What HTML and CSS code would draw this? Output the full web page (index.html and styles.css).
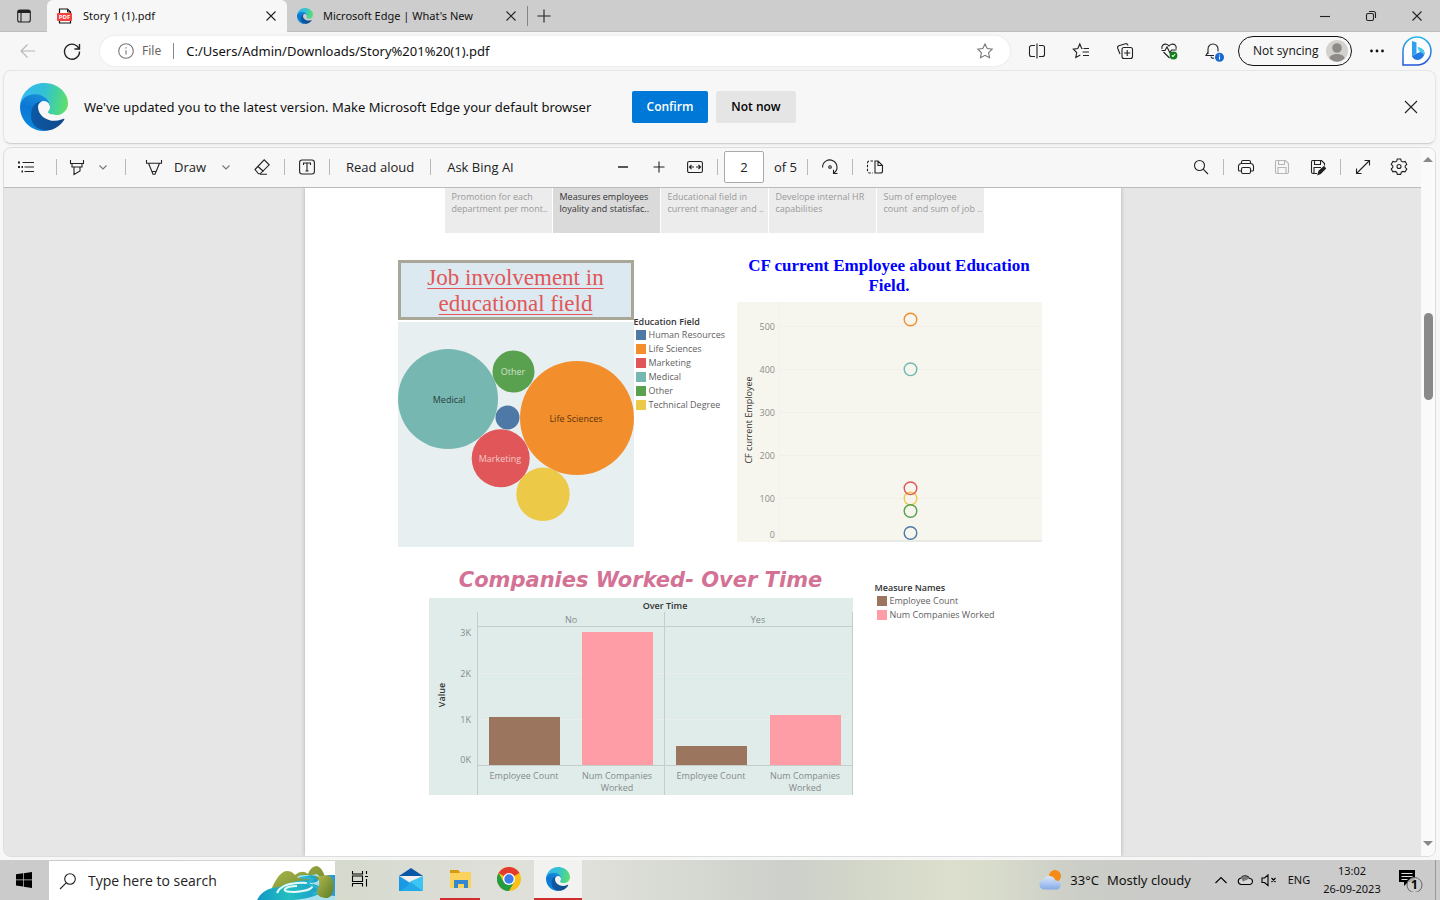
FILE: index.html
```html
<!DOCTYPE html>
<html lang="en">
<head>
<meta charset="utf-8">
<title>Story 1 (1).pdf</title>
<link rel="stylesheet" href="styles.css">
</head>
<body>
<svg class="defs" aria-hidden="true">
  <defs>
    <linearGradient id="edge-a" x1="60" y1="180" x2="230" y2="180" gradientUnits="userSpaceOnUse"><stop offset="0" stop-color="#0c59a4"/><stop offset="1" stop-color="#114a8b"/></linearGradient>
    <linearGradient id="edge-b" x1="120" y1="60" x2="60" y2="230" gradientUnits="userSpaceOnUse"><stop offset="0" stop-color="#1b8fd8"/><stop offset=".5" stop-color="#0b76d4"/><stop offset="1" stop-color="#0a86de"/></linearGradient>
    <linearGradient id="edge-c" x1="20" y1="60" x2="250" y2="110" gradientUnits="userSpaceOnUse"><stop offset="0" stop-color="#35b9f1"/><stop offset=".45" stop-color="#34c1d4"/><stop offset=".75" stop-color="#45d39a"/><stop offset="1" stop-color="#62de6c"/></linearGradient>
    <linearGradient id="bing" x1="0" y1="0" x2="0" y2="1"><stop offset="0" stop-color="#2ab5ee"/><stop offset="1" stop-color="#2456d8"/></linearGradient>
    <linearGradient id="river" x1="0" y1="0" x2="1" y2="0"><stop offset="0" stop-color="#1397c4"/><stop offset=".4" stop-color="#22bfc0"/><stop offset="1" stop-color="#1a8fd0"/></linearGradient>
    <linearGradient id="hill" x1="0" y1="0" x2="1" y2="1"><stop offset="0" stop-color="#b0b94c"/><stop offset="1" stop-color="#5d7c26"/></linearGradient>
    <linearGradient id="cloud" x1="0" y1="0" x2="0" y2="1"><stop offset="0" stop-color="#dbe8fb"/><stop offset="1" stop-color="#86abe8"/></linearGradient>
  </defs>
  <symbol id="edge" viewBox="0 0 256 256">
    <path fill="url(#edge-b)" d="M105.7 241.4c-8.9-5.5-16.6-12.8-22.7-21.3c-26.3-36-18.4-86.5 17.6-112.8c3.8-2.7 7.7-5.2 11.9-7.2c3.1-1.5 8.4-4.1 15.5-4c10.1.1 19.6 4.9 25.7 13c4 5.4 6.3 11.9 6.4 18.7c0-.2 24.5-79.6-80-79.6c-43.9 0-80 41.7-80 78.2c-.2 19.3 4 38.5 12.1 56c27.6 58.8 94.8 87.6 156.4 67.1c-21.1 6.6-44.1 3.7-62.9-8.1z"/>
    <path fill="url(#edge-a)" d="M231 190.5c-3.4 1.8-6.9 3.4-10.5 4.7c-11.5 4.3-23.6 6.5-35.9 6.5c-47.3 0-88.5-32.5-88.5-74.3c.1-11.4 6.4-21.9 16.4-27.3c-42.8 1.8-53.8 46.4-53.8 72.5c0 74 68.1 81.4 82.8 81.4c7.9 0 19.8-2.3 27-4.6l1.3-.4c27.6-9.5 51-28.1 66.6-52.8c1.2-1.9.6-4.3-1.2-5.5c-1.3-.8-2.9-.9-4.2-.2z"/>
    <path fill="url(#edge-c)" d="M152.3 148.9c-.8 1-3.3 2.5-3.3 5.7c0 2.6 1.7 5.1 4.7 7.2c14.4 10 41.5 8.7 41.6 8.7c10.7 0 21.1-2.9 30.3-8.3c18.8-11 30.4-31.1 30.4-52.9c.3-22.4-8-37.3-11.3-43.9C223.5 23.9 177.7 0 128 0C58 0 1 56.2 0 126.2c.5-36.5 36.8-66 80-66c3.5 0 23.5.3 42 10.1c16.3 8.6 24.9 18.9 30.8 29.2c6.2 10.7 7.3 24.1 7.3 29.5c0 5.3-2.7 13.3-7.8 19.9z"/>
  </symbol>
  <symbol id="close" viewBox="0 0 16 16"><path d="M3.5 3.5l9 9M12.5 3.5l-9 9"/></symbol>
  <symbol id="chevron" viewBox="0 0 16 16"><path d="M4.5 6.5L8 10l3.500-3.500"/></symbol>
</svg>

<header class="tabs">
  <button class="tab-menu" aria-label="Tab actions"><svg class="icon" viewBox="0 0 16 16"><rect x="1.700" y="2" width="12.600" height="12" rx="2"/><path d="M1.700 4h12.600M5 5v9" /><path d="M2 3.500h12" stroke-width="3"/></svg></button>
  <div class="tab tab-active">
    <svg class="tab-icon" viewBox="0 0 16 16"><path d="M2.500 1h8l3 3v11h-11z" fill="#fff" stroke="#111" stroke-width="1.200"/><path d="M10.500 1v3h3" fill="none" stroke="#111"/><rect x="0" y="5" width="15" height="8" rx="1" fill="#f5403e"/><text x="7.500" y="11" class="pdf-mark">PDF</text></svg>
    <span>Story 1 (1).pdf</span>
    <button class="tab-close" aria-label="Close tab"><svg class="icon"><use href="#close"/></svg></button>
  </div>
  <div class="tab">
    <svg class="tab-icon"><use href="#edge"/></svg>
    <span>Microsoft Edge | What's New</span>
    <button class="tab-close" aria-label="Close tab"><svg class="icon"><use href="#close"/></svg></button>
  </div>
  <i class="tab-rule"></i>
  <button class="tab-new" aria-label="New tab"><svg class="icon" viewBox="0 0 16 16"><path d="M8 1.500v13M1.500 8h13"/></svg></button>
  <div class="window-buttons">
    <button aria-label="Minimize"><svg class="icon" viewBox="0 0 16 16"><path d="M3 8.500h10"/></svg></button>
    <button aria-label="Restore"><svg class="icon" viewBox="0 0 16 16"><rect x="3.500" y="5.500" width="7" height="7" rx="1.500"/><path d="M6 3.500h4.500a2 2 0 0 1 2 2V10"/></svg></button>
    <button aria-label="Close window"><svg class="icon"><use href="#close"/></svg></button>
  </div>
</header>

<nav class="address-bar">
  <button class="nav-button faint" aria-label="Back"><svg class="icon" viewBox="0 0 16 16"><path d="M15 8H1M7.500 1.500L1 8l6.500 6.500"/></svg></button>
  <button class="nav-button" aria-label="Refresh"><svg class="icon large" viewBox="0 0 18 18"><path stroke-width="1.400" d="M16 7A7.500 7.500 0 1 0 16.500 9.500M16.500 2v5h-5"/></svg></button>
  <div class="url">
    <svg class="icon grey" viewBox="0 0 16 16"><circle cx="8" cy="8" r="7.300"/><path d="M8 7.200v4.300M8 4.300v1.300"/></svg>
    <span class="scheme">File</span><i></i>
    <input type="text" aria-label="Address" value="C:/Users/Admin/Downloads/Story%201%20(1).pdf">
    <button class="star" aria-label="Add to favorites"><svg class="icon grey" viewBox="0 0 16 16"><path d="M8 .9l2.200 4.600 5 .7-3.600 3.500.9 5L8 12.300l-4.500 2.400.9-5L.8 6.200l5-.7z"/></svg></button>
  </div>
  <button class="nav-button" aria-label="Split screen"><svg class="icon" viewBox="0 0 16 16"><path d="M6 2.500H2.500a2 2 0 0 0-2 2v7a2 2 0 0 0 2 2H6M8 .5v15M10 2.500h3.500a2 2 0 0 1 2 2v7a2 2 0 0 1-2 2H10"/></svg></button>
  <button class="nav-button" aria-label="Favorites"><svg class="icon" viewBox="0 0 16 16"><path d="M9.500 5.500H8.700L6.800 1 4.800 5.500l-4.500.7 3.400 3.300-.9 5 4.500-2.400M10.500 5.500H16M9.500 9H16M10 12.500h6"/></svg></button>
  <button class="nav-button" aria-label="Collections"><svg class="icon" viewBox="0 0 16 16"><path d="M3 11L.7 5.200a2 2 0 0 1 1.200-2.500l6.500-2a2 2 0 0 1 2.400 1.200L11 2.500"/><rect x="5" y="4.500" width="10.500" height="11" rx="2"/><path d="M10.200 7v6M7.200 10h6"/></svg></button>
  <button class="nav-button" aria-label="Browser essentials"><svg class="icon" viewBox="0 0 16 16"><path d="M1 6C0 2 3 .8 5.500 1.200 7 1.500 8 3 8 3s1-1.500 2.500-1.800C13.500.8 16 2.500 15 6M2.500 9l6 6M.5 7.500H4l2-3.500 3 6 1.500-3h5"/><circle cx="12.500" cy="12.500" r="3.900" fill="#12801a" stroke="none"/><path class="white" d="M10.800 12.500l1.200 1 2.200-2.500"/></svg></button>
  <button class="nav-button" aria-label="Notifications"><svg class="icon" viewBox="0 0 16 16"><path d="M3 11V6a5 5 0 0 1 10 0V8.500M9 12.500H1L3 9M6 13.500c.3 1.800 2 2 3 1.500"/><circle cx="14.500" cy="14.200" r="4.500" fill="#1769d2" stroke="none"/><path class="white" d="M14.500 13.500v3M14.500 11.500v1"/></svg></button>
  <button class="profile">Not syncing<svg viewBox="0 0 22 22"><circle cx="11" cy="11" r="11" fill="#d3d1ce"/><circle cx="11" cy="8" r="4.800" fill="#8f8b88"/><path d="M3.500 18.500C3.500 12.500 18.500 12.500 18.500 18.500Q11 25 3.500 18.500z" fill="#8f8b88"/></svg></button>
  <button class="nav-button more" aria-label="Settings and more"><svg class="icon" viewBox="0 0 16 16"><g fill="#111" stroke="none"><circle cx="2.500" cy="8" r="1.400"/><circle cx="8" cy="8" r="1.400"/><circle cx="13.500" cy="8" r="1.400"/></g></svg></button>
  <button class="bing" aria-label="Bing"><svg viewBox="0 0 30 30"><path d="M1 29V15A14 14 0 1 1 15 29z" fill="#fdfefe" stroke="url(#bing)" stroke-width="1.500"/><path d="M10 5l4.500 1.500V17l-4.500 4z" fill="#2da1ef"/><path d="M10 20.500l4.500-3 4-1.500-2-4.500c5 1 8 5 4.500 9.500-3 3.500-8 4.500-11-.5z" fill="#2478e2"/><path d="M15.500 11c5 1 8 4 6.500 8-1.500-3-4-2-5.500-5z" fill="#45cdec"/></svg></button>
</nav>

<section class="banner">
  <svg class="banner-logo"><use href="#edge"/></svg>
  <p>We've updated you to the latest version. Make Microsoft Edge your default browser</p>
  <button class="action primary">Confirm</button>
  <button class="action">Not now</button>
  <button class="banner-close" aria-label="Dismiss"><svg class="icon" viewBox="0 0 16 16"><path d="M2 2l12 12M14 2L2 14"/></svg></button>
</section>

<main class="viewer">
  <div class="viewer-body">
    <div class="toolbar">
      <div class="group">
        <button class="tool contents" aria-label="Contents"><svg class="icon" viewBox="0 0 16 16"><path d="M4.500 3.500H16M6.500 8H16M6.500 12.500H16"/><path stroke-width="1.800" d="M0 3.500h2M0 8h2M3.500 8h1.500M3.500 12.500h1.500"/></svg></button>
        <i class="rule"></i>
        <button class="tool tight" aria-label="Highlight"><svg class="icon" viewBox="0 0 16 16"><path d="M1.500 1v3.500h13V1M3 4.500V8h10V4.500M5 8v7.500l6-3.500V8"/></svg></button>
        <button class="drop" aria-label="Highlight options"><svg class="icon"><use href="#chevron"/></svg></button>
        <i class="rule wide"></i>
        <button class="tool text-tool draw"><svg class="icon" viewBox="0 0 16 16"><path d="M.5 1v3.200h15V1M2.500 4.200L7 15.300h2L13.500 4.200M6 12.500h4"/></svg>Draw</button>
        <button class="drop" aria-label="Draw options"><svg class="icon"><use href="#chevron"/></svg></button>
        <button class="tool erase" aria-label="Erase"><svg class="icon" viewBox="0 0 16 16"><path d="M1 10.500L10.200.8l5 5-9 9H4.500zM4 7.500l5.500 5M6 15.300h7"/></svg></button>
        <i class="rule"></i>
        <button class="tool" aria-label="Add text"><svg class="icon" viewBox="0 0 16 16"><rect x=".6" y="1" width="14.800" height="14" rx="2.500"/><path d="M4.500 6V4h7v2M8 4v8M6.500 12h3"/></svg></button>
        <i class="rule"></i>
        <button class="tool text-tool">Read aloud</button>
        <i class="rule"></i>
        <button class="tool text-tool">Ask Bing AI</button>
      </div>
      <div class="group">
        <button class="tool" aria-label="Zoom out"><svg class="icon" viewBox="0 0 16 16"><path d="M3 8h10" stroke-width="1.400"/></svg></button>
        <button class="tool" aria-label="Zoom in"><svg class="icon" viewBox="0 0 16 16"><path d="M8 2.500v11M2.500 8h11"/></svg></button>
        <button class="tool" aria-label="Fit to width"><svg class="icon" viewBox="0 0 16 16"><rect x=".6" y="2.500" width="14.800" height="11" rx="1.500"/><path d="M2.500 8H7M9 8h4.500M4.500 6l-2 2 2 2M11.500 6l2 2-2 2"/></svg></button>
        <i class="rule"></i>
        <input class="page-number" type="text" value="2" aria-label="Page number"><span class="page-count">of 5</span>
        <i class="rule"></i>
        <button class="tool" aria-label="Rotate"><svg class="icon" viewBox="0 0 16 16"><path d="M.6 8.500A7.200 7.200 0 1 1 12 14M11.500 10.800V14.500h4"/><circle cx="8" cy="8" r="1.300"/></svg></button>
        <i class="rule"></i>
        <button class="tool" aria-label="Page view"><svg class="icon" viewBox="0 0 16 16"><path d="M8 2v12h5.500a2 2 0 0 0 2-2V6.500L11 2zM11 2v4.500h4.500"/><path stroke-dasharray="2.500 1.500" d="M6 2H2.500a2 2 0 0 0-2 2v8a2 2 0 0 0 2 2H6"/></svg></button>
      </div>
      <div class="group right">
        <button class="tool" aria-label="Search"><svg class="icon" viewBox="0 0 16 16"><circle cx="6.500" cy="6.500" r="5"/><path d="M10.200 10.200L15 15"/></svg></button>
        <i class="rule"></i>
        <button class="tool" aria-label="Print"><svg class="icon" viewBox="0 0 16 16"><path d="M3.500 12H1.500q-1 0-1-1V7a3 3 0 0 1 3-2.500h9a3 3 0 0 1 3 2.500v4q0 1-1 1h-2M3.500 4.500V3q0-1.500 1.500-1.500h6q1.500 0 1.500 1.500v1.500"/><rect x="3.500" y="8.500" width="9" height="6" rx="1.500"/></svg></button>
        <button class="tool faint" aria-label="Save"><svg class="icon" viewBox="0 0 16 16"><path d="M2.500 1.500h9l3 3v8.500q0 1.500-1.500 1.500H3q-1.500 0-1.500-1.500V3q0-1.500 1-1.500zM4.500 1.500v4h6v-4M4 14.500v-6h8v6"/></svg></button>
        <button class="tool" aria-label="Save as"><svg class="icon" viewBox="0 0 16 16"><path d="M7 14.500H3q-1.500 0-1.500-1.500V3q0-1.500 1-1.500h9l3 3v2M4.500 1.500v4h6v-4M4 14.500v-6h7"/><path d="M8 15.500l1-3.500 5-4.500 1.500 2-5 5z" fill="#222"/></svg></button>
        <i class="rule"></i>
        <button class="tool" aria-label="Full screen"><svg class="icon" viewBox="0 0 16 16"><path d="M1.500 14.500l13-13M9.500 1.500h5v5M6.500 14.500h-5v-5"/></svg></button>
        <button class="tool" aria-label="Settings"><svg class="icon" viewBox="0 0 16 16"><circle cx="8" cy="7.500" r="2"/><path d="M6.300 0h3.400l.6 2.200 1.500.8 2.300-.6 1.700 2.900-1.600 1.600v1.500l1.600 1.700-1.700 2.800-2.300-.5-1.500.8-.6 2.200H6.300l-.6-2.200-1.500-.8-2.300.5L.2 10.100l1.600-1.700V6.900L.2 5.300l1.700-2.900 2.300.6 1.500-.8z"/></svg></button>
      </div>
    </div>

    <div class="desk">
      <article class="sheet">
        <div class="story-points">
          <div>Promotion for each<br>department per mont..</div>
          <div class="current">Measures employees<br>loyality and statisfac..</div>
          <div>Educational field in<br>current manager and ..</div>
          <div>Develope internal HR<br>capabilities</div>
          <div>Sum of employee<br>count&nbsp; and sum of job ..</div>
        </div>

        <div class="row">
          <section class="bubbles">
            <h2>Job involvement in educational field</h2>
            <svg width="236" height="225" viewBox="0 0 236 225" role="img" aria-label="Job involvement in educational field">
              <circle cx="50" cy="77" r="50" fill="#76b7b2"/>
              <circle cx="179" cy="96" r="57" fill="#f28e2b"/>
              <circle cx="115.500" cy="49.500" r="21" fill="#59a14f"/>
              <circle cx="109.500" cy="95.500" r="12" fill="#4e79a7"/>
              <circle cx="102.700" cy="136.300" r="29" fill="#e15759"/>
              <circle cx="145" cy="172.300" r="26.700" fill="#edc948"/>
              <g class="mid">
                <text x="51" y="81" fill="#2b3f3e">Medical</text>
                <text x="178" y="100" fill="#5a3611">Life Sciences</text>
                <text x="115" y="53" fill="#cfe2cc">Other</text>
                <text x="102" y="140" fill="#f4c8c8">Marketing</text>
              </g>
            </svg>
          </section>
          <section class="legend">
            <h3>Education Field</h3>
            <ul>
              <li><i class="blue"></i>Human Resources</li>
              <li><i class="orange"></i>Life Sciences</li>
              <li><i class="red"></i>Marketing</li>
              <li><i class="teal"></i>Medical</li>
              <li><i class="green"></i>Other</li>
              <li><i class="yellow"></i>Technical Degree</li>
            </ul>
          </section>
          <section class="scatter">
            <h2>CF current Employee about Education Field.</h2>
            <svg width="305" height="240" viewBox="0 0 305 240" role="img" aria-label="CF current Employee by education field">
              <path class="grid" d="M42.500 0v240M43 24.500h262M43 67.500h262M43 110.500h262M43 153.500h262M43 196.500h262"/>
              <path d="M43 239h262" stroke="#e9e9e6" stroke-width="2"/>
              <g class="end" fill="#8c8c88">
                <text x="38" y="28">500</text><text x="38" y="71">400</text><text x="38" y="114">300</text><text x="38" y="157">200</text><text x="38" y="200">100</text><text x="38" y="236">0</text>
              </g>
              <text class="mid" transform="translate(15 118) rotate(-90)" fill="#333">CF current Employee</text>
              <g fill="none" stroke-width="1.400">
                <circle cx="173.500" cy="17.500" r="6.300" stroke="#f28e2b"/>
                <circle cx="173.500" cy="67.300" r="6.300" stroke="#76b7b2"/>
                <circle cx="173.500" cy="196.500" r="6.300" stroke="#edc948"/>
                <circle cx="173.500" cy="186.300" r="6.300" stroke="#e15759"/>
                <circle cx="173.500" cy="209" r="6.300" stroke="#59a14f"/>
                <circle cx="173.500" cy="231" r="6.300" stroke="#4e79a7"/>
              </g>
            </svg>
          </section>
        </div>

        <div class="row row-bottom">
          <section class="bars">
            <h2>Companies Worked- Over Time</h2>
            <svg width="424" height="197" viewBox="0 0 424 197" role="img" aria-label="Companies worked over time">
              <path stroke="#e9eeed" d="M46 75.500h378M46 121.500h378M46 28.500h378M142.500 168v3M330.500 168v3"/>
              <path stroke="#c6cccb" fill="none" d="M48.500 14v183M235.500 14v183M423.500 14v183M49 28.500h375M49 167.500h375"/>
              <g fill="#9c755f"><rect x="60" y="119" width="71" height="48"/><rect x="247" y="148" width="71" height="19"/></g>
              <g fill="#ff9da7"><rect x="153" y="34" width="71" height="133"/><rect x="341" y="117" width="71" height="50"/></g>
              <g class="mid" fill="#858b8a">
                <text x="236" y="11" class="bold" fill="#333">Over Time</text>
                <text x="142" y="25">No</text><text x="329" y="25">Yes</text>
                <text x="95" y="181">Employee Count</text><text x="282" y="181">Employee Count</text>
                <text x="188" y="181">Num Companies</text><text x="188" y="193">Worked</text>
                <text x="376" y="181">Num Companies</text><text x="376" y="193">Worked</text>
                <text class="bold" fill="#333" transform="translate(16 97) rotate(-90)">Value</text>
              </g>
              <g class="end" fill="#858b8a"><text x="42" y="38">3K</text><text x="42" y="79">2K</text><text x="42" y="125">1K</text><text x="42" y="165">0K</text></g>
            </svg>
          </section>
          <section class="legend measures">
            <h3>Measure Names</h3>
            <ul>
              <li><i class="brown"></i>Employee Count</li>
              <li><i class="pink"></i>Num Companies Worked</li>
            </ul>
          </section>
        </div>
      </article>
    </div>
  </div>
  <div class="scrollbar"><i class="arrow up"></i><i class="thumb"></i><i class="arrow down"></i></div>
</main>

<footer class="taskbar">
  <button class="start" aria-label="Start"><svg viewBox="0 0 16 16"><path d="M0 2.300l7-1v6.200H0zM7.700 1.200L16 0v7.500H7.700zM0 8.200h7v6.300l-7-1zM7.700 8.200H16V16l-8.300-1.300z"/></svg></button>
  <label class="search">
    <svg class="icon" viewBox="0 0 16 16"><circle cx="10" cy="6" r="5.300"/><path d="M6.200 9.800L0 16"/></svg>
    <input type="text" placeholder="Type here to search" aria-label="Search">
    <svg class="landscape" viewBox="0 0 78 34"><path d="M70 9h8v25h-8z" fill="#2a9bd3"/><path d="M14 24Q22 5 30 5q5 0 8 4 7-6 13-1 3-8 9-8 4 1 7 8l4 14v12H14z" fill="url(#hill)"/><path d="M0 34Q6 22 22 21q16-8 34-7l-15-3 2-2h14l4 5 6 3-2 8L78 30v4z" fill="url(#river)"/><path d="M40 12q0-3 8-3 15 0 14 4-1 4-10 4 16 3 12 9-6 6-28 8h42v-4l-16-2 6-12-8-8z" fill="#a9e2ec"/><path d="M20 27q4-9 20-10 18-1 15 4-2 4-18 5-11 0-9-3 3-3 12-3" fill="none" stroke="#e4f9f8" stroke-width="2"/><path d="M44 12h8q7 1 0 4-4 2 6 4 8 4-2 8" fill="none" stroke="#2bb5cf" stroke-width="2.500"/><path d="M61 11q13-5 15 4 2 14-5 17-12 0-11-8 4-5 1-13z" fill="url(#hill)"/></svg>
  </label>
  <button class="task task-view" aria-label="Task view"><svg class="icon black" viewBox="0 0 16 16"><path d="M.5 0v3h10V0M.5 15.500v-3h10v3M.5 5h10v5.500H.5zM14.500 0v3M14.500 8v7.500M13 5.500h3"/></svg></button>
  <button class="task" aria-label="Mail"><svg class="app" viewBox="0 0 24 24"><path d="M0 9L12 1l12 8z" fill="#0a57a8"/><path d="M2 9h20l-9 8z" fill="#f2f2f2"/><path d="M0 9l24 15H0z" fill="#189be4"/><path d="M24 9v15L10 15z" fill="#3cc4f2"/><path d="M12 15.500L24 24H2z" fill="#23a9e9"/></svg></button>
  <button class="task running partial" aria-label="File Explorer"><svg class="app" viewBox="0 0 24 24"><path d="M2 3h8l2 2v4H2z" fill="#d9990f"/><path d="M2 6h9l2-1h10v16H2z" fill="#fbd25c"/><path d="M6 21v-8h14v8h-4v-4h-6v4z" fill="#3488cf"/></svg></button>
  <button class="task" aria-label="Chrome"><svg class="app" viewBox="0 0 24 24"><circle cx="12" cy="12" r="12" fill="#fbc116"/><path d="M12 12L1.600 6A12 12 0 0 1 22.400 6z" fill="#e33b2e"/><path d="M1.600 6A12 12 0 0 0 12 24l5.200-9H6.800z" fill="#259b43"/><circle cx="12" cy="12" r="6" fill="#fff"/><circle cx="12" cy="12" r="4.700" fill="#3b7ded"/></svg></button>
  <button class="task running active" aria-label="Microsoft Edge"><svg class="app"><use href="#edge"/></svg></button>
  <div class="tray">
    <button class="weather"><svg viewBox="0 0 24 24"><circle cx="17" cy="8" r="6" fill="#f58a16"/><path d="M6 21.500a5 5 0 0 1-.5-9.900 6.500 6.500 0 0 1 12 1A4.500 4.500 0 0 1 19 21.500z" fill="url(#cloud)"/></svg><span>33°C</span><span>Mostly cloudy</span></button>
    <button aria-label="Show hidden icons"><svg class="icon black" viewBox="0 0 16 16"><path d="M2.500 11L8 5.500l5.500 5.500"/></svg></button>
    <button aria-label="OneDrive"><svg class="icon black" viewBox="0 0 16 16"><path d="M4 12.500a3.300 3.300 0 0 1 0-6.500 5 5 0 0 1 8.500.5 3 3 0 0 1 0 6z" fill="#d8d8d8"/><path d="M4 6a5 5 0 0 1 8.500.5L6 9.500z" fill="#777" stroke="none"/></svg></button>
    <button aria-label="Muted"><svg class="icon black" viewBox="0 0 16 16"><path d="M1 6h2.500L7 3v10.500L3.500 10.500H1zM10.500 6l4 4M14.500 6l-4 4"/></svg></button>
    <button class="language">ENG</button>
    <button class="clock"><span>13:02</span><span>26-09-2023</span></button>
    <button class="notices" aria-label="1 notification"><svg viewBox="0 0 24 24"><path d="M0 2h16v12H9l-4 4v-4H0z" fill="#000"/><path d="M2.500 5.500h11M2.500 8.500h11M2.500 11.500h6" stroke="#ddd" stroke-width="1.200"/><circle cx="15.500" cy="17" r="7.500" fill="#cbcbcb" fill-opacity=".85" stroke="#666"/><text x="15.500" y="21">1</text></svg></button>
  </div>
</footer>
</body>
</html>
```

FILE: styles.css
```css
* { box-sizing: border-box; }
html, body { height: 100%; }
body {
  margin: 0;
  display: flex;
  flex-direction: column;
  overflow: hidden;
  background: #f7f7f7;
  color: #111;
  font: 13px/20px "Noto Sans", "Open Sans", sans-serif;
}
button, input { font: inherit; color: inherit; margin: 0; padding: 0; border: 0; background: none; }
button { display: flex; align-items: center; justify-content: center; flex: none; white-space: nowrap; }
input { outline: 0; min-width: 0; }
h2, h3, p, ul { margin: 0; padding: 0; }
ul { list-style: none; }
svg { display: block; flex: none; }
.defs { position: absolute; width: 0; height: 0; }
.icon { width: 16px; height: 16px; fill: none; stroke: #222; stroke-width: 1.1; overflow: visible; }
.large { width: 18px; height: 18px; }
.grey { stroke: #777; }
.black { stroke: #000; }
.white { stroke: #fff; }
.faint { opacity: .3; }

/* Tab strip */
.tabs { flex: none; display: flex; align-items: center; height: 32px; background: #cdcdcd; border-bottom: 1px solid #bdbdbd; font-size: 11px; }
.tab-menu { width: 47px; }
.tab { display: flex; align-items: center; gap: 10px; width: 240px; height: 32px; padding: 0 8px 0 10px; white-space: nowrap; }
.tab-active { background: #f7f7f7; border-radius: 6px 6px 0 0; align-self: flex-start; }
.tab-icon { width: 16px; height: 16px; }
.tab-close { margin-left: auto; }
.pdf-mark { font: bold 6px "Open Sans", sans-serif; fill: #fff; text-anchor: middle; }
.tab-rule { width: 1px; height: 20px; background: #858585; }
.tab-new { width: 32px; }
.window-buttons { display: flex; margin-left: auto; }
.window-buttons button { width: 46px; height: 30px; }

/* Address bar */
.address-bar { flex: none; display: flex; align-items: center; height: 38px; padding: 0 8px 0 6px; }
.nav-button { width: 44px; height: 30px; }
.url { flex: 1; display: flex; align-items: center; height: 30px; margin: 0 5px 0 6px; padding: 0 17px 0 18px; border-radius: 15px; background: #fff; box-shadow: 0 0 3px #e2e2e2; }
.scheme { margin-left: 8px; color: #666; font-size: 12px; }
.url i { width: 1px; height: 16px; margin: 0 12px; background: #888; }
.url input { flex: 1; }
.profile { width: 114px; height: 30px; padding: 0 3px 0 14px; justify-content: space-between; border: 1px solid #111; border-radius: 15px; margin-left: 3px; font: 12px/20px "Open Sans", sans-serif; }
.profile svg { width: 22px; height: 22px; }
.more { width: 50px; }
.bing svg { width: 30px; height: 30px; }

/* Default browser prompt */
.banner { flex: none; display: flex; align-items: center; height: 74px; margin: 0 4px 3px 3px; padding: 0 16px; border: 1px solid #e6e6e6; border-bottom-color: #d2d2d2; border-radius: 8px; box-shadow: 0 1px 2px #e8e8e8; }
.banner-logo { width: 48px; height: 48px; margin-right: 16px; }
.banner p { min-width: 516px; margin-right: 32px; white-space: nowrap; }
.action { width: 80px; height: 32px; border-radius: 2px; background: #e5e5e5; color: #000; font: 600 12px/20px "Open Sans", sans-serif; }
.primary { width: 76px; margin-right: 8px; background: #0078d7; color: #fff; }
.banner-close { margin-left: auto; }

/* PDF viewer */
.viewer { flex: 1; min-height: 0; display: flex; margin: 0 4px 3px 3px; border: 1px solid #ddd; border-radius: 8px; overflow: hidden; }
.viewer-body { flex: 1; min-width: 0; display: flex; flex-direction: column; }
.toolbar { flex: none; display: grid; grid-template-columns: minmax(0, 601px) auto 1fr; align-items: center; height: 40px; padding-bottom: 2px; border-bottom: 1px solid #bbb; font: 13px/20px "Open Sans", sans-serif; color: #222; }
.group { display: flex; align-items: center; }
.right { justify-content: flex-end; padding-right: 4px; }
.tool { width: 36px; height: 32px; }
.contents { margin: 0 8px 0 4px; }
.tight { width: 34px; margin-left: -1px; }
.drop { width: 18px; }
.drop .icon { stroke: #777; }
.rule { width: 1px; height: 16px; margin: 0 4px; background: #b9b9b9; }
.wide { margin-left: 13px; }
.text-tool { width: auto; padding: 0 12px; }
.draw { gap: 12px; padding: 0 11px 0 16px; }
.erase { margin-left: 9px; }
.page-number { width: 40px; height: 32px; margin-left: 2px; border: 1px solid #aaa; border-radius: 2px; background: #fff; text-align: center; }
.page-count { width: 39px; padding-left: 10px; white-space: nowrap; }
.scrollbar { width: 14px; display: flex; flex-direction: column; align-items: center; background: #fafafa; padding: 9px 0 10px; }
.arrow { border: 5px solid transparent; }
.up { border-top: 0; border-bottom-color: #888; }
.down { margin-top: auto; border-bottom: 0; border-top-color: #888; }
.thumb { width: 9px; height: 87px; margin-top: 151px; border-radius: 5px; background: #898989; }

/* Document */
.desk { flex: 1; min-height: 0; overflow: hidden; background: #e6e6e6; }
.sheet { width: 816px; min-height: 100%; margin: 0 auto; padding-left: 93px; background: #fff; box-shadow: 0 0 4px #aaa; font: 9px/12px "Open Sans", sans-serif; }
.story-points { display: flex; gap: 1px; margin-left: 47px; color: #9a9a9a; }
.story-points div { width: 107px; height: 45px; padding: 3px 0 0 7px; background: #ececec; white-space: nowrap; }
.story-points .current { background: #dadada; color: #333; }
.row { display: flex; align-items: flex-start; margin-top: 23px; }
.bubbles { width: 236px; margin-top: 4px; }
.bubbles h2 { height: 60px; margin-bottom: 2px; padding-top: 2px; border: 3px solid #a9a797; background: #dce9f0; color: #e15759; font: 23px/26px "Liberation Serif", serif; text-align: center; text-decoration: underline; text-decoration-thickness: 1px; text-underline-offset: 3px; }
.bubbles svg { background: #e7eff1; }
.scatter { width: 305px; }
.scatter h2 { margin-bottom: 6px; color: #00f; font: bold 17px/20px "Liberation Serif", serif; text-align: center; }
.scatter svg { background: #f7f6ee; }
.grid { stroke: #f0f0ec; }
.legend { width: 103px; margin-top: 60px; color: #5f5f5f; white-space: nowrap; }
.legend h3 { color: #333; font-size: 9px; line-height: 12px; font-weight: 600; }
.legend li { display: flex; align-items: center; gap: 3px; height: 14px; padding-left: 2px; }
.legend i { width: 10px; height: 10px; }
.blue { background: #4e79a7; }
.orange { background: #f28e2b; }
.red { background: #e15759; }
.teal { background: #76b7b2; }
.green { background: #59a14f; }
.yellow { background: #edc948; }
.brown { background: #9c755f; }
.pink { background: #ff9da7; }
.row-bottom { margin: 20px 0 0 31px; }
.bars { width: 424px; }
.bars h2 { margin-bottom: 5px; color: #d37295; font: italic bold 21px/26px "DejaVu Sans", sans-serif; text-align: center; white-space: nowrap; }
.bars svg { background: #dfecea; }
.measures { width: auto; margin: 15px 0 0 22px; }
.sheet text { font: 9px "Open Sans", sans-serif; }
.sheet .bold { font-weight: 600; }
.mid { text-anchor: middle; }
.end { text-anchor: end; }

/* Taskbar */
.taskbar { flex: none; display: flex; height: 40px; background: linear-gradient(90deg, #cbcbcb 0, #cbcbcb 5%, #d5dacd 23%, #d9dcd2 28%, #dfe0da 35%, #dfe0da 41%, #cdd0ca 55%, #d3d7c9 60%, #dcdfcd 66%, #d8dccb 69%, #cbcdc7 75%, #cbcbcb 85%, #cbcbcb 100%); }
.start { width: 48px; }
.start svg { width: 16px; height: 16px; }
.search { display: flex; align-items: center; gap: 12px; width: 286px; margin: 1px 1px 0; padding-left: 11px; background: #fff; }
.search input { width: 185px; font: 14px/20px "Open Sans", sans-serif; }
.search input::placeholder { color: #222; opacity: 1; }
.landscape { width: 78px; height: 34px; align-self: flex-end; margin-left: -12px; }
.task { width: 48px; margin-right: 1px; border-bottom: 2px solid transparent; }
.task-view { margin-right: 3px; }
.app { width: 24px; height: 24px; }
.running { border-bottom-color: #d22d2d; background-clip: padding-box; }
.partial { width: 40px; margin: 0 5px 0 4px; }
.active { background-color: #f2f3f1; }
.tray { display: flex; align-items: stretch; margin-left: auto; }
.tray button { width: 24px; }
.tray .weather { width: auto; gap: 8px; margin-right: 18px; }
.weather svg { width: 24px; height: 24px; }
.tray .language { width: 36px; font-size: 11px; }
.tray .clock { width: 70px; flex-direction: column; font-size: 11px; line-height: 18px; }
.tray .notices { width: 49px; margin-right: 4px; border-right: 1px solid #999; }
.notices svg { width: 24px; height: 24px; }
.notices text { font: bold 12px "Open Sans", sans-serif; text-anchor: middle; }
```
